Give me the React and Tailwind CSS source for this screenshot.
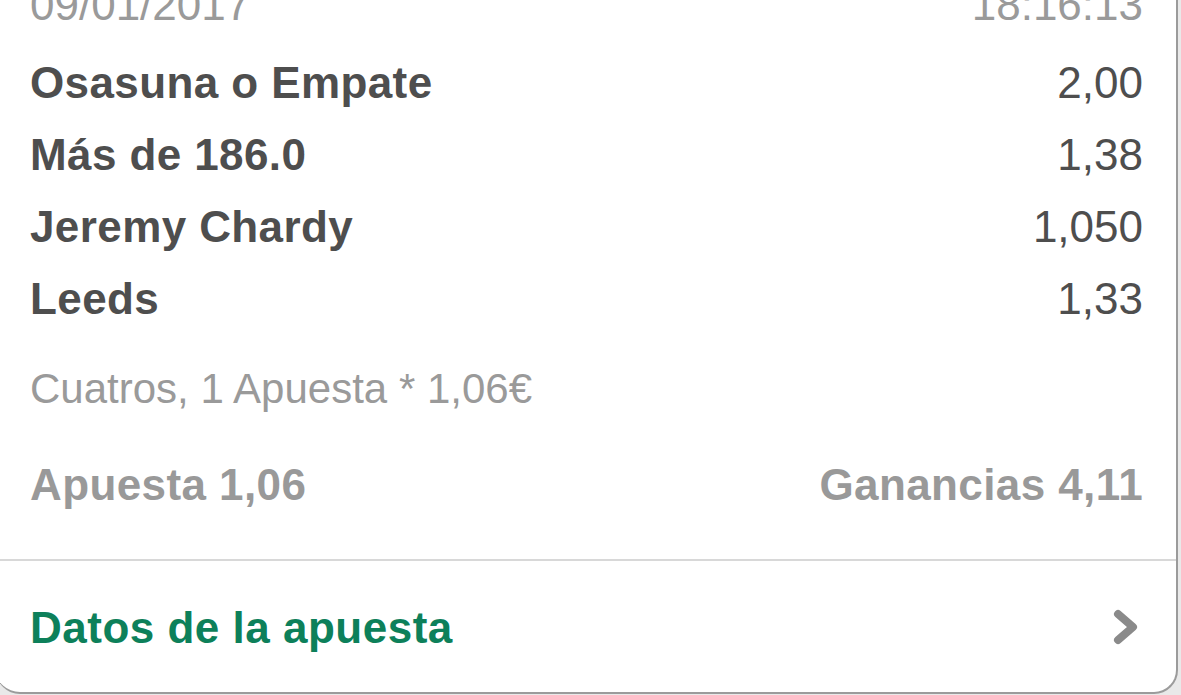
const LEGS = [
  { name: 'Osasuna o Empate', odds: '2,00' },
  { name: 'Más de 186.0', odds: '1,38' },
  { name: 'Jeremy Chardy', odds: '1,050' },
  { name: 'Leeds', odds: '1,33' },
]

export default function App() {
  return (
    <div className="h-[695px] w-full overflow-hidden bg-[#e9e9e9]" style={{ fontFamily: '"Liberation Sans", Arial, sans-serif' }}>
      <div className="-ml-[4px] w-[1182px] bg-white border-r-2 border-b-2 border-[#9b9b9b] rounded-br-[24px] rounded-bl-[24px]">
        {/* Body */}
        <div className="pl-[34px] pr-[33px]">
          <div className="-mt-[31px] mb-[6px] flex justify-between text-[44px] leading-[72px] text-[#9a9a9a]">
            <span>09/01/2017</span>
            <span>18:16:13</span>
          </div>

          {LEGS.map(leg => (
            <div key={leg.name} className="flex justify-between text-[44px] leading-[72px] text-[#4e4e4e]">
              <span className="font-bold tracking-[0.4px]">{leg.name}</span>
              <span>{leg.odds}</span>
            </div>
          ))}

          <p className="mt-[18px] text-[42px] leading-[72px] text-[#9a9a9a]">
            Cuatros, 1 Apuesta * 1,06€
          </p>

          <div className="mt-[24px] flex justify-between text-[44px] leading-[72px] font-bold tracking-[0.4px] text-[#999999]">
            <span>Apuesta 1,06</span>
            <span>Ganancias 4,11</span>
          </div>
        </div>

        <div className="mt-[38px] h-[2px] bg-[#d8d8d8]" />

        {/* Footer link */}
        <div className="pl-[34px] pr-[35px] pt-[31px] pb-[28px] flex items-center justify-between">
          <span className="text-[44px] leading-[72px] font-bold tracking-[0.5px] text-[#0d805a]">Datos de la apuesta</span>
          <svg width="28" height="36" viewBox="0 0 28 36" className="mt-[-2px]">
            <polyline points="5,5 20,18 5,31" fill="none" stroke="#8a8a8a" strokeWidth="8" strokeLinejoin="round" strokeLinecap="round" />
          </svg>
        </div>
      </div>
    </div>
  )
}
